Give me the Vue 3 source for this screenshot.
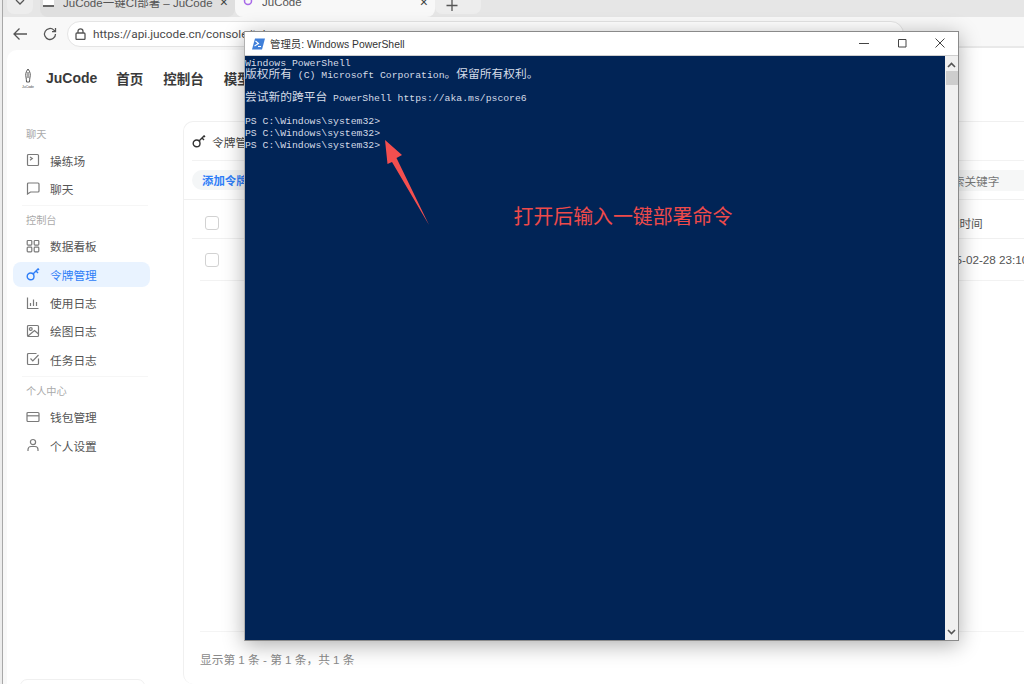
<script setup>
const groups = [
  { label: '聊天', items: [
    { text: '操练场', d: ['M2.500 1.500h9a1 1 0 0 1 1 1v9a1 1 0 0 1-1 1h-9a1 1 0 0 1-1-1v-9a1 1 0 0 1 1-1z', 'M4 4l2.300 1.600L4 7.200'] },
    { text: '聊天', d: ['M2.500 2h9.500a1 1 0 0 1 1 1v7a1 1 0 0 1-1 1H4.500L1.500 13V3a1 1 0 0 1 1-1z'] }
  ] },
  { label: '控制台', items: [
    { text: '数据看板', d: ['M2 1.500h3a.8.8 0 0 1 .8.8v3a.8.8 0 0 1-.8.8H2a.8.8 0 0 1-.8-.8v-3a.8.8 0 0 1 .8-.8z', 'M9 1.500h3a.8.8 0 0 1 .8.8v3a.8.8 0 0 1-.8.8H9a.8.8 0 0 1-.8-.8v-3A.8.8 0 0 1 9 1.500z', 'M2 8.200h3a.8.8 0 0 1 .8.8v3a.8.8 0 0 1-.8.8H2a.8.8 0 0 1-.8-.8V9a.8.8 0 0 1 .8-.8z', 'M9 8.200h3a.8.8 0 0 1 .8.8v3a.8.8 0 0 1-.8.8H9a.8.8 0 0 1-.8-.8V9A.8.8 0 0 1 9 8.200z'] },
    { text: '令牌管理', active: true, d: ['M4.600 6a3.400 3.400 0 1 0 0 6.800 3.400 3.400 0 0 0 0-6.800z', 'M7 7l5.500-5.500', 'M10 4l2 2', 'M12 2l1 1'] },
    { text: '使用日志', d: ['M1.500 1.500v11h11', 'M4.500 10V7', 'M7.500 10V3.500', 'M10.500 10V6'] },
    { text: '绘图日志', d: ['M2.500 1.500h9a1 1 0 0 1 1 1v9a1 1 0 0 1-1 1h-9a1 1 0 0 1-1-1v-9a1 1 0 0 1 1-1z', 'M4.800 3.600a1.400 1.400 0 1 0 0 2.800 1.400 1.400 0 0 0 0-2.800z', 'M2 12l6.500-5.500 4 3.500'] },
    { text: '任务日志', d: ['M12.500 6.500v5a1 1 0 0 1-1 1h-9a1 1 0 0 1-1-1v-9a1 1 0 0 1 1-1h8', 'M4.500 6.500l2.300 2.300L12.500 3'] }
  ] },
  { label: '个人中心', items: [
    { text: '钱包管理', d: ['M2 2.500h10a1 1 0 0 1 1 1v7a1 1 0 0 1-1 1H2a1 1 0 0 1-1-1v-7a1 1 0 0 1 1-1z', 'M1 5.800h12'] },
    { text: '个人设置', d: ['M7 1.500a2.600 2.600 0 1 0 0 5.200 2.600 2.600 0 0 0 0-5.200z', 'M2 13v-1.500a3 3 0 0 1 3-3h4a3 3 0 0 1 3 3V13'] }
  ] }
]
const keyPaths = groups[1].items[1].d
</script>

<template>
  <div class="page">
    <div class="frame">
      <div class="tabs">
        <div class="tab-menu">
          <svg width="10" height="6" viewBox="0 0 10 6"><path d="M1 0l4 4 4-4" class="ico-dark" /></svg>
        </div>
        <div class="tab">
          <span class="favicon"></span>
          <span class="tab-title">JuCode一键CI部署 – JuCode</span>
          <span class="tab-x">×</span>
        </div>
        <div class="tab tab-current">
          <svg class="tab-logo" width="10" height="10" viewBox="0 0 10 10"><circle cx="5" cy="4" r="3.500" fill="none" stroke="#a86ae8" stroke-width="1.500" /></svg>
          <span class="tab-title">JuCode</span>
          <span class="tab-x">×</span>
        </div>
        <div class="tab-new">
          <svg width="12" height="12" viewBox="0 0 12 12"><path d="M6 0v11M.5 5.500h11" class="ico-dark" /></svg>
        </div>
      </div>

      <div class="toolbar">
        <svg class="tool" width="16" height="14" viewBox="0 0 16 14"><path d="M15 7H2M7.500 1.500L2 7l5.500 5.500" class="ico-dark" /></svg>
        <svg class="tool" width="14" height="14" viewBox="0 0 14 14"><path d="M12.500 7a5.500 5.500 0 1 1-1.600-3.900L12.500 4.600M12.500 1v3.600H9" class="ico-dark" /></svg>
        <div class="address">
          <svg width="11" height="12" viewBox="0 0 11 12"><path d="M2 5h7a1 1 0 0 1 1 1v4.500a1 1 0 0 1-1 1H2a1 1 0 0 1-1-1V6a1 1 0 0 1 1-1zM3 5V3.300a2.500 2.500 0 0 1 5 0V5" class="ico-dark" /></svg>
          <span class="url">https://api.jucode.cn/console/token</span>
        </div>
        <div class="toolbar-end"></div>
      </div>

      <div class="main">
        <header class="topnav">
          <svg class="logo" width="14" height="19" viewBox="0 0 14 19">
            <path d="M7 0C4.500 3 4.500 6 5 8c.3 1.500.4 3 .5 5h3c.1-2 .2-3.500.5-5 .5-2 .5-5-2-8z" fill="none" stroke="#555" stroke-width="1" />
            <path d="M7 3v6" stroke="#555" stroke-width="1" />
            <text x="7" y="18.500" text-anchor="middle" class="logo-text">JuCode</text>
          </svg>
          <span class="brand">JuCode</span>
          <nav class="nav">
            <span>首页</span>
            <span>控制台</span>
            <span>模型广场</span>
          </nav>
        </header>

        <div class="content">
          <aside class="sidebar">
            <template v-for="(g, gi) in groups" :key="g.label">
              <div v-if="gi > 0" class="side-rule"></div>
              <div class="side-label">{{ g.label }}</div>
              <div v-for="it in g.items" :key="it.text" class="side-item" :class="{ active: it.active }">
                <svg width="14" height="14" viewBox="0 0 14 14">
                  <path v-for="p in it.d" :key="p" :d="p" class="ico" />
                </svg>
                <span>{{ it.text }}</span>
              </div>
            </template>
            <div class="side-collapse"></div>
          </aside>

          <section class="card">
            <div class="card-head">
              <svg width="14" height="14" viewBox="0 0 14 14">
                <path v-for="p in keyPaths" :key="p" :d="p" class="ico-black" />
              </svg>
              <span>令牌管理</span>
            </div>
            <div class="card-tools">
              <span class="add-btn">添加令牌</span>
              <span class="search">搜索关键字</span>
            </div>
            <div class="thead">
              <span class="check"></span>
              <span class="time-cell">创建时间</span>
            </div>
            <div class="trow">
              <span class="check"></span>
              <span class="time-cell">2025-02-28 23:10:26</span>
            </div>
            <div class="spacer"></div>
            <div class="card-foot">显示第 1 条 - 第 1 条，共 1 条</div>
          </section>
        </div>
      </div>
    </div>

    <div class="window">
      <div class="win-title">
        <svg width="13" height="12" viewBox="0 0 13 12">
          <path d="M3 0.500h10L10 11.500H0z" fill="#3f7fd9" />
          <path d="M3.500 3l3 2.500-4 2.500" fill="none" stroke="#fff" stroke-width="1.100" />
          <path d="M6 8.500h3" stroke="#fff" stroke-width="1.100" />
        </svg>
        <span class="win-name">管理员: Windows PowerShell</span>
        <div class="win-controls">
          <svg width="10" height="10" viewBox="0 0 10 10"><path d="M0 5.500h10" class="ico-win" /></svg>
          <svg width="10" height="10" viewBox="0 0 10 10"><path d="M1.500 1.500h7.500v7.500H1.500z" class="ico-win" /></svg>
          <svg width="10" height="10" viewBox="0 0 10 10"><path d="M.5.500l9 9M9.500.500l-9 9" class="ico-win" /></svg>
        </div>
      </div>
      <div class="win-body">
        <div class="terminal">
          <div class="line">Windows PowerShell</div>
          <div class="line"><span class="cjk">版权所有</span> (C) Microsoft Corporation<span class="cjk">。保留所有权利。</span></div>
          <div class="line"></div>
          <div class="line"><span class="cjk">尝试新的跨平台</span> PowerShell https://aka.ms/pscore6</div>
          <div class="line"></div>
          <div class="line">PS C:\Windows\system32&gt;</div>
          <div class="line">PS C:\Windows\system32&gt;</div>
          <div class="line">PS C:\Windows\system32&gt;</div>
          <svg class="arrow" width="60" height="100" viewBox="0 0 60 100">
            <path d="M2 2L19 17 13.500 20 46 87 9 24 4.500 26z" fill="#f44f4f" />
          </svg>
          <div class="note">打开后输入一键部署命令</div>
        </div>
        <div class="scrollbar">
          <svg width="9" height="6" viewBox="0 0 9 6"><path d="M1 5l3.500-3.500L8 5" class="ico-scroll" /></svg>
          <div class="thumb"></div>
          <svg class="scroll-down" width="9" height="6" viewBox="0 0 9 6"><path d="M1 1l3.500 3.500L8 1" class="ico-scroll" /></svg>
        </div>
      </div>
    </div>
  </div>
</template>

<style>
html, body { margin: 0; overflow: hidden; background: #fff; }
</style>

<style scoped>
.page {
  position: relative;
  width: 1024px;
  height: 684px;
  overflow: hidden;
  background: #ececec;
  font-family: "Liberation Sans", "Noto Sans CJK SC", sans-serif;
  color: #333;
}
.frame {
  display: flex;
  flex-direction: column;
  margin-left: 2px;
  height: 684px;
  border-left: 1px solid #a8a8a8;
  background: #f8f8f8;
}
.tabs {
  display: flex;
  align-items: flex-end;
  height: 17px;
  flex: none;
  overflow: hidden;
  background: #e6e6e6;
  padding-left: 4px;
}
.tab-menu {
  display: flex;
  align-items: flex-start;
  justify-content: center;
  width: 26px;
  height: 14px;
  box-sizing: border-box;
  margin-bottom: 3px;
  margin-right: 7px;
  flex: none;
  background: #ededed;
  border-radius: 0 0 7px 7px;
}
.tab {
  display: flex;
  align-items: center;
  flex: none;
  box-sizing: border-box;
  width: 195px;
  height: 30px;
  padding: 0 7px 0 3px;
  font-size: 11.500px;
  color: #555;
  background: #dfdfdf;
  border-radius: 8px;
}
.tab-current {
  width: 200px;
  padding-left: 8px;
  background: #f8f8f8;
}
.favicon {
  width: 11px;
  height: 10px;
  margin: 0 9px 0 0;
  background: #fff;
  border-bottom: 2px solid #666;
  box-sizing: border-box;
  flex: none;
}
.tab-logo { margin-right: 9px; flex: none; }
.tab-title { flex: 1; white-space: nowrap; overflow: hidden; }
.tab-x { font-size: 14px; color: #444; }
.tab-new {
  display: flex;
  align-items: flex-start;
  justify-content: center;
  box-sizing: border-box;
  flex: 1;
  margin-bottom: 3px;
  height: 14px;
  max-width: 46px;
  padding-right: 12px;
  background: #ededed;
  border-radius: 0 0 7px 7px;
}
.ico-dark { fill: none; stroke: #555; stroke-width: 1.300; }
.toolbar {
  display: flex;
  align-items: center;
  height: 33px;
  flex: none;
  padding-left: 9px;
  background: #f8f8f8;
}
.tool { margin-right: 15px; flex: none; }
.tool + .tool { margin-right: 10px; }
.address {
  display: flex;
  align-items: center;
  gap: 7px;
  flex: 1;
  height: 24px;
  margin: 1px 0 0;
  padding-left: 7px;
  background: #fff;
  border: 1px solid #e4e4e4;
  border-radius: 13px;
  font-family: Roboto, "Liberation Sans", sans-serif;
  font-size: 11.800px;
  color: #4a4a4a;
}
.url { white-space: nowrap; }
.toolbar-end {
  align-self: stretch;
  width: 120px;
  background: linear-gradient(#f8f8f8 29px, #e9e9e9 29px, #e9e9e9 31px, #fff 31px);
}
.main {
  display: flex;
  flex-direction: column;
  flex: 1;
  margin-left: 4px;
  background: #fff;
  border-radius: 10px 0 0 0;
}
.topnav {
  display: flex;
  align-items: center;
  height: 56px;
  margin-bottom: 15px;
  padding-left: 14px;
  flex: none;
}
.logo { flex: none; }
.logo-text { font-size: 3.500px; fill: #444; font-family: "Liberation Sans", sans-serif; }
.brand {
  margin-left: 11px;
  font-size: 14px;
  font-weight: 700;
  color: #3a3a3a;
}
.nav {
  display: flex;
  gap: 20px;
  margin-left: 19px;
  font-size: 13.500px;
  font-weight: 700;
  color: #3a3a3a;
  white-space: nowrap;
}
.content { display: flex; flex: 1; min-height: 0; }
.sidebar {
  position: relative;
  flex: none;
  box-sizing: border-box;
  width: 176px;
  padding: 5px 0 0 6px;
}
.side-label {
  height: 18px;
  line-height: 18px;
  margin-bottom: 3.500px;
  padding-left: 13px;
  font-size: 10.200px;
  color: #aaa;
}
.side-item {
  display: flex;
  align-items: center;
  gap: 10px;
  box-sizing: border-box;
  width: 137px;
  height: 25px;
  margin-bottom: 3.400px;
  padding-left: 13px;
  border-radius: 8px;
  font-size: 11.700px;
  color: #555;
}
.side-item.active { background: #e9f3ff; color: #2f7ef7; }
.ico { fill: none; stroke: #7a7a7a; stroke-width: 1.200; }
.active .ico { stroke: #2f7ef7; stroke-width: 1.400; }
.ico-black { fill: none; stroke: #333; stroke-width: 1.400; }
.side-rule {
  width: 126px;
  height: 1px;
  margin: 4.400px 0 5.500px 9px;
  background: #f6f6f6;
}
.side-collapse {
  position: absolute;
  left: 13px;
  bottom: -9px;
  width: 123px;
  height: 12px;
  border: 1px solid #f0f0f0;
  border-radius: 8px;
}
.card {
  display: flex;
  flex-direction: column;
  box-sizing: border-box;
  width: 841px;
  flex: none;
  border: 1px solid #f0f0f0;
  border-right: 0;
  border-bottom: 0;
  border-radius: 10px 0 0 10px;
  font-size: 11.700px;
  overflow: hidden;
}
.card-head {
  display: flex;
  align-items: center;
  gap: 6px;
  height: 38px;
  margin-left: 8px;
  border-bottom: 1px solid #f2f2f2;
  flex: none;
  color: #444;
  white-space: nowrap;
}
.card-tools {
  display: flex;
  justify-content: space-between;
  align-items: center;
  height: 38px;
  flex: none;
  padding-left: 8px;
  border-bottom: 1px solid #f0f0f0;
}
.add-btn {
  display: flex;
  align-items: center;
  height: 20px;
  width: 100px;
  padding-left: 10px;
  box-sizing: border-box;
  border-radius: 10px;
  background: #f4f6f7;
  color: #2f7ef7;
  font-weight: 700;
  font-size: 11.400px;
}
.search {
  display: flex;
  align-items: center;
  box-sizing: border-box;
  width: 120px;
  height: 21px;
  padding-left: 37px;
  background: #f6f7f7;
  color: #777;
}
.thead, .trow {
  display: flex;
  align-items: center;
  box-sizing: border-box;
  flex: none;
  margin-left: 8px;
  padding-left: 13px;
  color: #555;
}
.thead { height: 39px; padding-top: 7px; border-bottom: 1px solid #f0f0f0; }
.trow { height: 42px; border-bottom: 1px solid #f2f2f2; margin-left: 16px; padding-left: 5px; }
.check {
  box-sizing: border-box;
  width: 14px;
  height: 14px;
  border: 1.500px solid #d2d2d2;
  border-radius: 3px;
  flex: none;
}
.time-cell {
  margin-left: auto;
  width: 88px;
  flex: none;
  white-space: nowrap;
}
.spacer { flex: 1; }
.card-foot {
  flex: none;
  height: 52px;
  line-height: 55px;
  margin-left: 16px;
  border-top: 1px solid #f4f4f4;
  color: #8a8a8a;
}
.window {
  position: absolute;
  left: 244px;
  top: 31px;
  display: flex;
  flex-direction: column;
  box-sizing: border-box;
  width: 715px;
  height: 610px;
  border: 1px solid #8a8a8a;
  border-left-color: #b0b0b0;
  background: #fff;
  box-shadow: 0 4px 20px rgba(0, 0, 0, 0.32);
}
.win-title {
  display: flex;
  align-items: center;
  box-sizing: border-box;
  height: 24px;
  flex: none;
  padding-left: 7px;
  background: #fff;
  border-bottom: 1px solid #cfcfcf;
}
.win-name {
  margin-left: 5px;
  font-size: 10.400px;
  color: #333;
  white-space: nowrap;
}
.win-controls {
  display: flex;
  gap: 28px;
  margin-left: auto;
  padding-right: 13px;
  padding-bottom: 1px;
}
.ico-win { fill: none; stroke: #444; stroke-width: 1; }
.win-body { display: flex; flex: 1; min-height: 0; }
.terminal {
  position: relative;
  flex: 1;
  background: #012456;
  color: #d4dbe6;
  font-family: "Liberation Mono", "Noto Sans CJK SC", monospace;
  font-size: 9.790px;
  padding-top: 2px;
}
.line {
  height: 11.700px;
  line-height: 11.700px;
  white-space: pre;
}
.cjk {
  font-family: "Noto Sans CJK SC", sans-serif;
  font-size: 11.740px;
  line-height: 0;
}
.arrow {
  position: absolute;
  left: 138px;
  top: 82px;
}
.note {
  position: absolute;
  left: 268.500px;
  top: 146px;
  font-family: "Noto Sans CJK SC", sans-serif;
  font-size: 19.900px;
  line-height: 28px;
  color: #ee4a4a;
  white-space: nowrap;
}
.scrollbar {
  display: flex;
  flex-direction: column;
  align-items: center;
  box-sizing: border-box;
  width: 13px;
  flex: none;
  padding-top: 6px;
  padding-bottom: 5px;
  background: #f0f0f0;
}
.thumb {
  width: 12px;
  height: 14px;
  margin-top: 3px;
  background: #cdcdcd;
}
.scroll-down { margin-top: auto; }
.ico-scroll { fill: none; stroke: #555; stroke-width: 1.600; }
</style>
